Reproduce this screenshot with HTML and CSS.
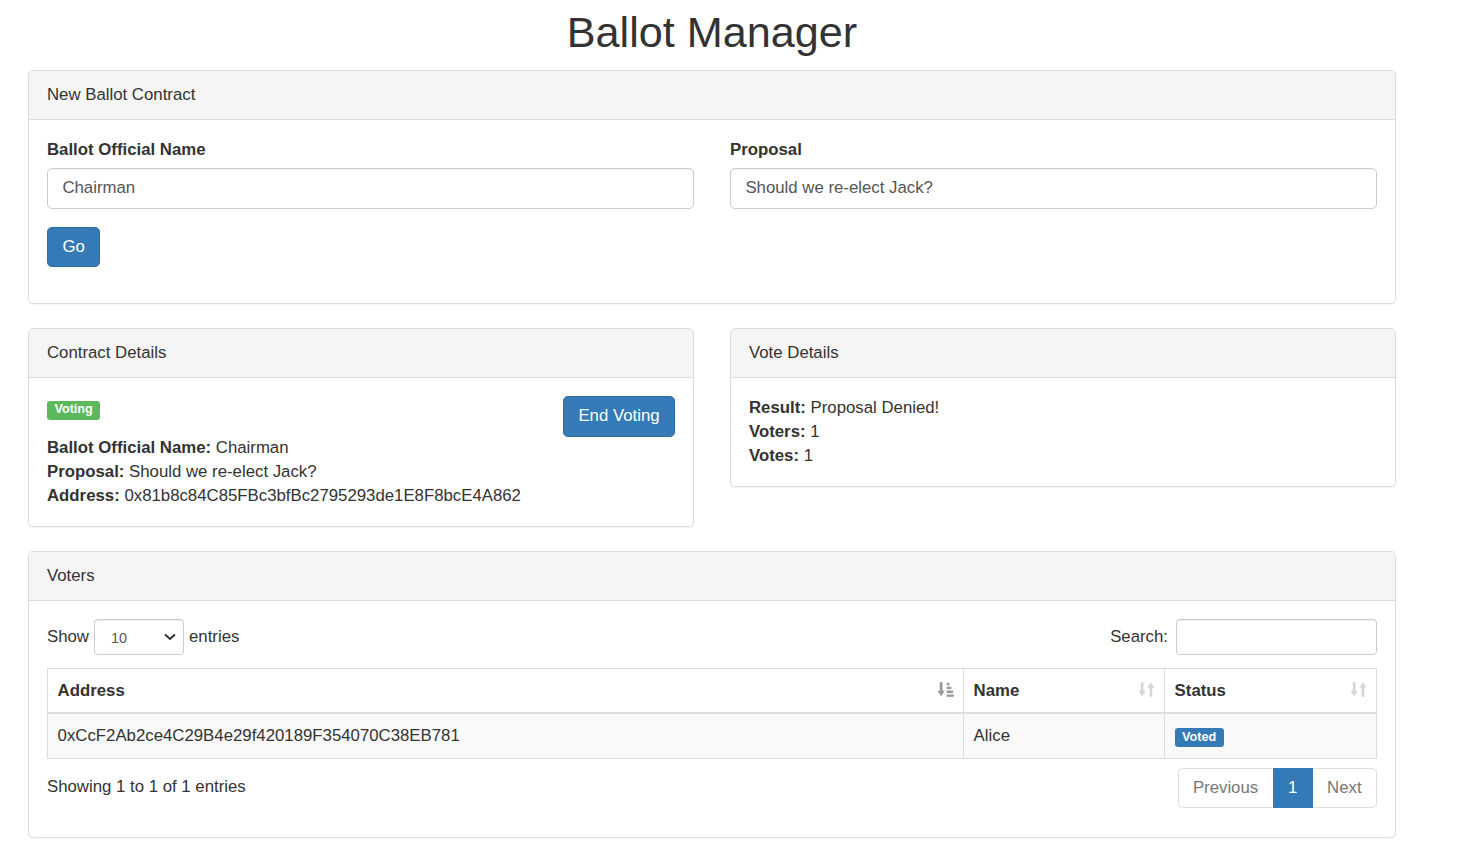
FILE: index.html
```html
<!DOCTYPE html>
<html>
<head>
<meta charset="utf-8">
<title>Ballot Manager</title>
<link rel="stylesheet" href="styles.css">
</head>
<body>
<div class="container">
  <h1 class="title">Ballot Manager</h1>

  <div class="panel">
    <div class="panel-heading">New Ballot Contract</div>
    <div class="panel-body">
      <div class="row">
        <div class="form-group">
          <label class="label-ctl">Ballot Official Name</label>
          <input class="form-control" type="text" value="Chairman">
        </div>
        <div class="form-group">
          <label class="label-ctl">Proposal</label>
          <input class="form-control" type="text" value="Should we re-elect Jack?">
        </div>
      </div>
      <div class="form-group form-group-last">
        <button class="btn btn-primary">Go</button>
      </div>
    </div>
  </div>

  <div class="row row-top">
    <div class="panel">
      <div class="panel-heading">Contract Details</div>
      <div class="panel-body">
        <button class="btn btn-primary btn-right">End Voting</button>
        <div class="badge-line"><span class="badge badge-success">Voting</span></div>
        <div><b>Ballot Official Name:</b> Chairman</div>
        <div><b>Proposal:</b> Should we re-elect Jack?</div>
        <div><b>Address:</b> 0x81b8c84C85FBc3bfBc2795293de1E8F8bcE4A862</div>
      </div>
    </div>
    <div class="panel">
      <div class="panel-heading">Vote Details</div>
      <div class="panel-body">
        <div><b>Result:</b> Proposal Denied!</div>
        <div><b>Voters:</b> 1</div>
        <div><b>Votes:</b> 1</div>
      </div>
    </div>
  </div>

  <div class="panel">
    <div class="panel-heading">Voters</div>
    <div class="panel-body panel-body-table">
      <div class="dt-top">
        <div class="dt-length">
          <span>Show</span>
          <span class="select-wrap">
            <select class="select-sm"><option>10</option><option>25</option><option>50</option></select>
            <svg class="chev" width="12" height="8" viewBox="0 0 12 8"><path d="M1 1.5 L6 6 L11 1.5" fill="none" stroke="#333" stroke-width="2"/></svg>
          </span>
          <span>entries</span>
        </div>
        <div class="dt-search">
          <span>Search:</span>
          <input class="input-sm search-input" type="search">
        </div>
      </div>
      <table class="dt-table">
        <thead>
          <tr>
            <th class="col-address">Address
              <svg class="sort-icon sorted" width="17" height="17" viewBox="0 0 14 14"><rect x="2.3" y="1" width="2.2" height="8"/><polygon points="0.4,8 6.4,8 3.4,12.5"/><rect x="8" y="1.5" width="2.2" height="2"/><rect x="8" y="4.7" width="3.8" height="2"/><rect x="8" y="7.9" width="5.2" height="2"/><rect x="8" y="11.1" width="5.8" height="1.9"/></svg>
            </th>
            <th class="col-name">Name
              <svg class="sort-icon" width="17" height="17" viewBox="0 0 14 14"><rect x="2.3" y="1" width="2.2" height="8"/><polygon points="0.4,8 6.4,8 3.4,12.5"/><rect x="9.5" y="5" width="2.2" height="8"/><polygon points="7.6,5.5 13.6,5.5 10.6,1"/></svg>
            </th>
            <th class="col-status">Status
              <svg class="sort-icon" width="17" height="17" viewBox="0 0 14 14"><rect x="2.3" y="1" width="2.2" height="8"/><polygon points="0.4,8 6.4,8 3.4,12.5"/><rect x="9.5" y="5" width="2.2" height="8"/><polygon points="7.6,5.5 13.6,5.5 10.6,1"/></svg>
            </th>
          </tr>
        </thead>
        <tbody>
          <tr class="odd">
            <td>0xCcF2Ab2ce4C29B4e29f420189F354070C38EB781</td>
            <td>Alice</td>
            <td><span class="badge badge-primary">Voted</span></td>
          </tr>
        </tbody>
      </table>
      <div class="dt-bottom">
        <div class="dt-info">Showing 1 to 1 of 1 entries</div>
        <ul class="pagination">
          <li class="disabled"><a>Previous</a></li>
          <li class="active"><a>1</a></li>
          <li class="disabled"><a>Next</a></li>
        </ul>
      </div>
    </div>
  </div>
</div>
</body>
</html>
```

FILE: styles.css
```css
* { box-sizing: border-box; }

body {
  margin: 0;
  font-family: "Liberation Sans", Arial, Helvetica, sans-serif;
  font-size: 16.8px;
  line-height: 24px;
  color: #333;
  background: #fff;
}

.container {
  width: 1368px;
  margin-left: 28px;
}

.title {
  text-align: center;
  font-size: 43.2px;
  font-weight: 500;
  line-height: 47.5px;
  margin: 9px 0 13.5px;
}

.panel {
  border: 1px solid #ddd;
  border-radius: 4.8px;
  background: #fff;
  margin-bottom: 24px;
  box-shadow: 0 1px 1px rgba(0, 0, 0, 0.05);
}

.panel-heading {
  background: #f5f5f5;
  border-bottom: 1px solid #ddd;
  padding: 12px 18px;
  border-radius: 3.8px 3.8px 0 0;
}

.panel-body {
  padding: 18px;
}

.row {
  display: grid;
  grid-template-columns: 1fr 1fr;
  column-gap: 36px;
  align-items: start;
}

.form-group {
  margin-bottom: 18px;
}

.form-group-last {
  padding-bottom: 18px;
  margin-bottom: 0;
}

.label-ctl {
  display: block;
  font-weight: bold;
  margin-bottom: 6px;
}

.form-control {
  display: block;
  width: 100%;
  height: 40.8px;
  padding: 7.2px 14.4px;
  font-family: inherit;
  font-size: 16.8px;
  line-height: 24px;
  color: #555;
  background: #fff;
  border: 1px solid #ccc;
  border-radius: 4.8px;
  box-shadow: inset 0 1px 1px rgba(0, 0, 0, 0.075);
}

.btn {
  display: inline-block;
  padding: 7.2px 14.4px;
  font-family: inherit;
  font-size: 16.8px;
  line-height: 24px;
  border-radius: 4.8px;
  border: 1px solid transparent;
  cursor: pointer;
}

.btn-primary {
  color: #fff;
  background: #337ab7;
  border-color: #2e6da4;
}

.btn-right {
  float: right;
}

.badge-line {
  margin-bottom: 15px;
  height: 25px;
  padding-top: 0;
}

.badge {
  display: inline-block;
  font-size: 12.6px;
  font-weight: bold;
  line-height: 1;
  color: #fff;
  padding: 2.5px 7.5px 3.8px;
  border-radius: 3.2px;
  vertical-align: baseline;
}

.badge-success { background: #5cb85c; }
.badge-primary { background: #337ab7; }

/* DataTable */
.panel-body-table {
  padding-bottom: 26px;
}

.dt-top {
  display: flex;
  justify-content: space-between;
  align-items: center;
  height: 36px;
}

.dt-length, .dt-search {
  display: flex;
  align-items: center;
  gap: 5px;
}

.select-wrap {
  position: relative;
  display: inline-block;
}

.select-sm {
  -webkit-appearance: none;
  appearance: none;
  width: 90px;
  height: 36px;
  padding: 6px 12px 4px 16px;
  font-family: inherit;
  font-size: 14.4px;
  color: #555;
  background: #fff;
  border: 1px solid #ccc;
  border-radius: 3.6px;
  box-shadow: inset 0 1px 1px rgba(0, 0, 0, 0.075);
}

.chev {
  position: absolute;
  right: 8px;
  top: 14px;
  pointer-events: none;
}

.search-input {
  width: 201px;
  height: 36px;
  margin-left: 3px;
  padding: 6px 12px;
  font-family: inherit;
  font-size: 14.4px;
  border: 1px solid #ccc;
  border-radius: 3.6px;
  box-shadow: inset 0 1px 1px rgba(0, 0, 0, 0.075);
}

.dt-table {
  width: 100%;
  border-collapse: collapse;
  margin-top: 13px;
  margin-bottom: 7px;
}

.dt-table th, .dt-table td {
  border: 1px solid #ddd;
  padding: 9.6px;
  line-height: 24px;
  text-align: left;
  vertical-align: middle;
}

.dt-table th {
  position: relative;
  font-weight: bold;
  padding-right: 36px;
  border-bottom: 2.4px solid #ddd;
}

.col-address { width: 916px; }
.col-name { width: 201px; }

.dt-table tbody tr.odd td {
  background: #f9f9f9;
}

.sort-icon {
  position: absolute;
  right: 9px;
  top: 12px;
  fill: #333;
  opacity: 0.2;
}

.sort-icon.sorted {
  opacity: 0.5;
}

.dt-bottom {
  display: flex;
  justify-content: space-between;
  align-items: flex-start;
}

.dt-info {
  padding-top: 9.6px;
}

.pagination {
  display: flex;
  list-style: none;
  margin: 2.4px 0;
  padding: 0;
}

.pagination a {
  display: block;
  padding: 7.2px 14.4px;
  line-height: 24px;
  border: 1px solid #ddd;
  margin-left: -1px;
  color: #777;
  background: #fff;
}

.pagination li:first-child a {
  margin-left: 0;
  border-radius: 4.8px 0 0 4.8px;
}

.pagination li:last-child a {
  border-radius: 0 4.8px 4.8px 0;
}

.pagination li.active a {
  background: #337ab7;
  border-color: #337ab7;
  color: #fff;
  position: relative;
  z-index: 1;
}
```
